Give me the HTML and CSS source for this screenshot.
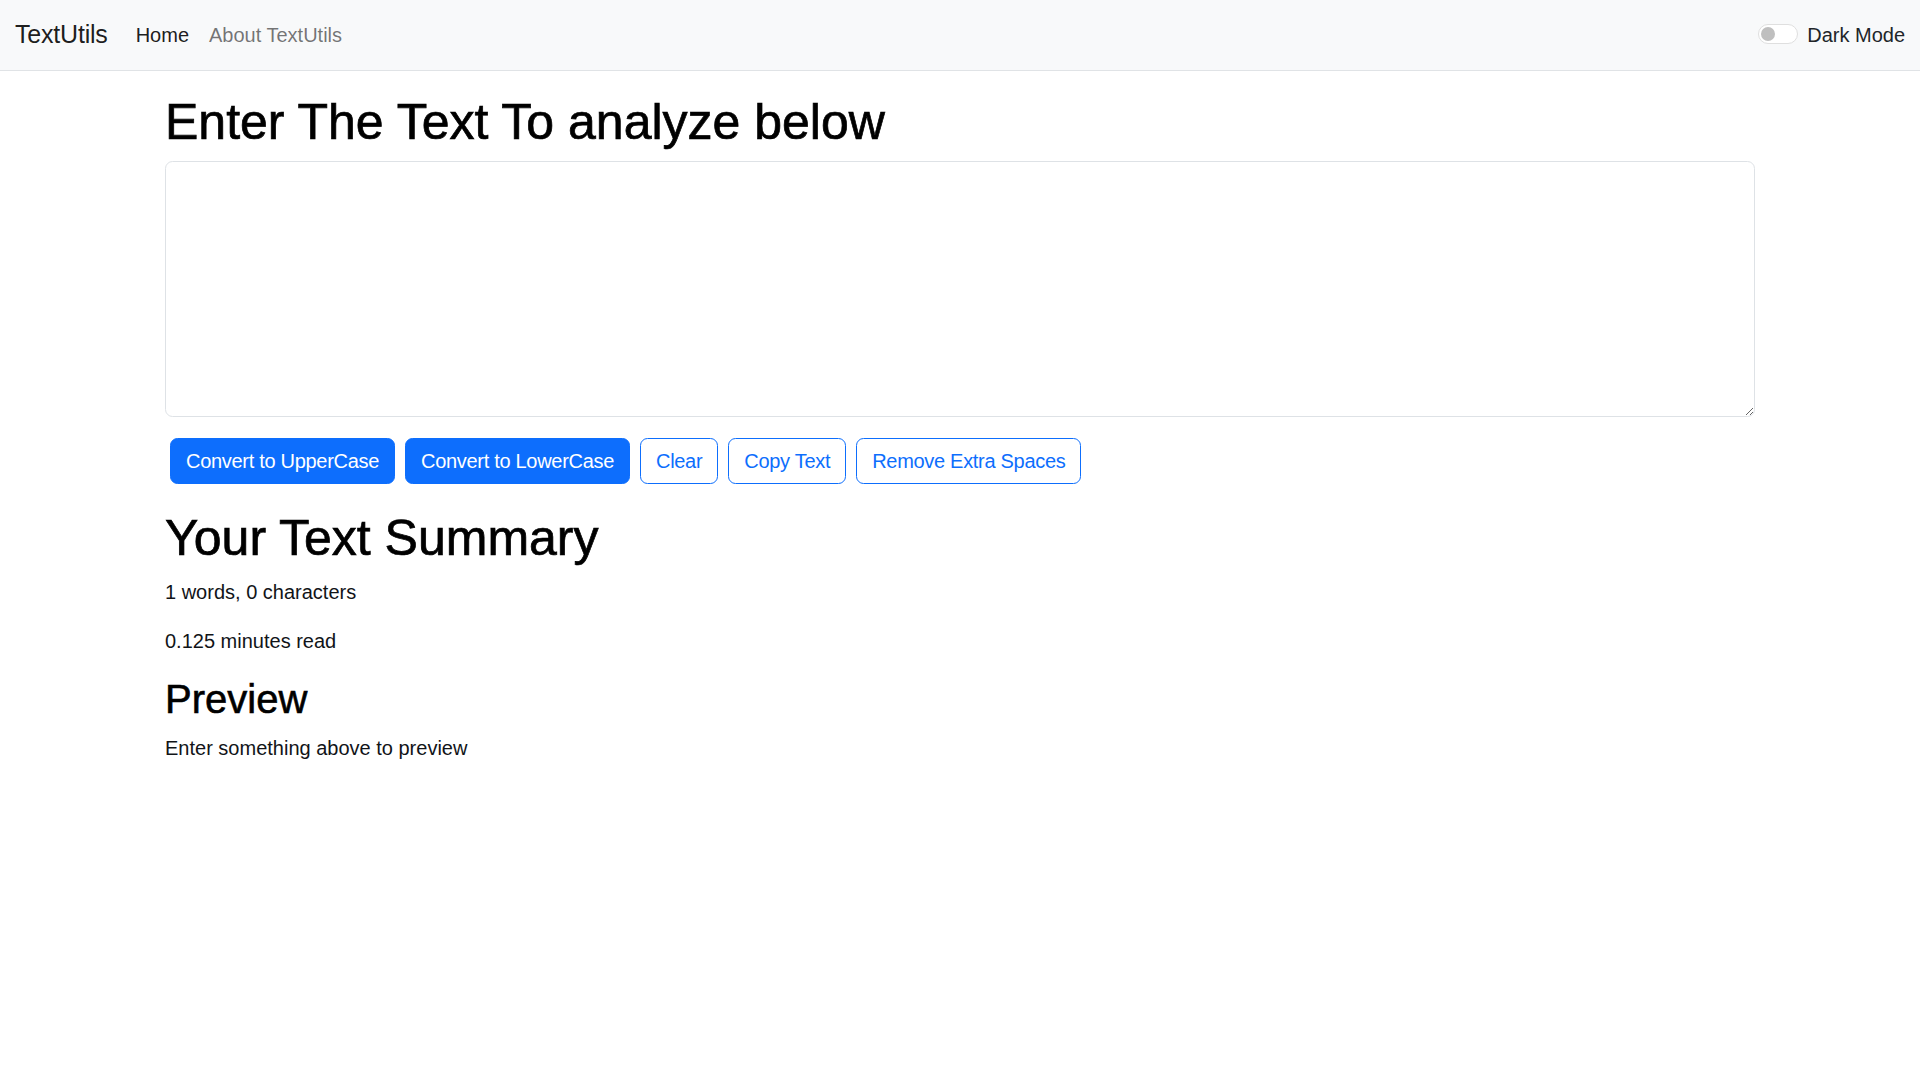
FILE: index.html
```html
<!DOCTYPE html>
<html lang="en">
<head>
<meta charset="utf-8">
<title>TextUtils - Home</title>
<link rel="stylesheet" href="styles.css">
</head>
<body>
<nav class="navbar">
  <div class="nav-inner">
    <a class="brand" href="#">TextUtils</a>
    <ul class="nav-links">
      <li><a class="nav-link active" href="#">Home</a></li>
      <li><a class="nav-link" href="#">About TextUtils</a></li>
    </ul>
    <div class="mode-switch">
      <span class="switch-track"></span>
      <label class="switch-label">Dark Mode</label>
    </div>
  </div>
</nav>

<main class="container editor">
  <h1 class="heading">Enter The Text To analyze below</h1>
  <textarea class="text-box" rows="8"></textarea>
  <div class="actions">
    <button class="btn btn-primary">Convert to UpperCase</button>
    <button class="btn btn-primary">Convert to LowerCase</button>
    <button class="btn btn-outline">Clear</button>
    <button class="btn btn-outline">Copy Text</button>
    <button class="btn btn-outline">Remove Extra Spaces</button>
  </div>
</main>

<section class="container summary">
  <h1 class="heading">Your Text Summary</h1>
  <p class="stat">1 words, 0 characters</p>
  <p class="stat">0.125 minutes read</p>
  <h2 class="subheading">Preview</h2>
  <p class="stat">Enter something above to preview</p>
</section>
</body>
</html>
```

FILE: styles.css
```css
* {
  box-sizing: border-box;
}

body {
  margin: 0;
  font-family: "Liberation Sans", Arial, sans-serif;
  font-size: 20px;
  line-height: 1.5;
  color: #212529;
  background: #ffffff;
}

/* Navbar */
.navbar {
  background: #f8f9fa;
  border-bottom: 1px solid #e0e3e6;
}

.nav-inner {
  height: 70px;
  padding: 0 15px;
  display: flex;
  align-items: center;
}

.brand {
  font-size: 25px;
  line-height: 37.5px;
  color: rgba(0, 0, 0, 0.9);
  text-decoration: none;
  margin-right: 18px;
  letter-spacing: -0.2px;
}

.nav-links {
  list-style: none;
  margin: 0;
  padding: 0;
  display: flex;
  flex: 1;
}

.nav-link {
  display: block;
  padding: 10px 10px;
  color: rgba(0, 0, 0, 0.55);
  text-decoration: none;
  line-height: 30px;
}

.nav-link.active {
  color: rgba(0, 0, 0, 0.9);
}

.mode-switch {
  display: flex;
  align-items: center;
  gap: 9px;
}

.switch-track {
  position: relative;
  width: 40px;
  height: 20px;
  border: 1px solid #dfdfdf;
  border-radius: 10px;
  background: #ffffff;
  margin-top: -3px;
}

.switch-track::after {
  content: "";
  position: absolute;
  left: 2px;
  top: 2px;
  width: 14px;
  height: 14px;
  border-radius: 50%;
  background: #bfbfbf;
}

.switch-label {
  color: #212529;
  line-height: 30px;
}

/* Containers */
.container {
  width: 1590px;
  margin: 0 auto;
}

.editor {
  padding-top: 21px;
}

.heading {
  font-size: 50px;
  font-weight: 500;
  line-height: 60px;
  margin: 0 0 9px;
  color: #000000;
  -webkit-text-stroke: 0.7px #000000;
}

.text-box {
  display: block;
  width: 100%;
  height: 256px;
  margin: 0;
  padding: 7.5px 15px;
  border: 1px solid #dee2e6;
  border-radius: 7.5px;
  font-family: "Liberation Sans", Arial, sans-serif;
  font-size: 20px;
  line-height: 1.5;
  color: #212529;
  background: #ffffff;
  resize: vertical;
}

.actions {
  margin-top: 21px;
  display: flex;
  gap: 10px;
  padding-left: 5px;
}

.btn {
  font-family: "Liberation Sans", Arial, sans-serif;
  font-size: 20px;
  line-height: 30px;
  letter-spacing: -0.3px;
  padding: 7px 15px;
  border: 1px solid #0d6efd;
  border-radius: 7.5px;
  cursor: pointer;
}

.btn-primary {
  background: #0d6efd;
  color: #ffffff;
}

.btn-outline {
  background: #ffffff;
  color: #0d6efd;
}

.summary {
  margin-top: 24px;
}

.stat {
  margin: 0 0 19px;
  color: #111418;
}

.subheading {
  font-size: 40px;
  font-weight: 500;
  line-height: 48px;
  margin: 3px 0 10px;
  color: #000000;
  -webkit-text-stroke: 0.6px #000000;
}
```
